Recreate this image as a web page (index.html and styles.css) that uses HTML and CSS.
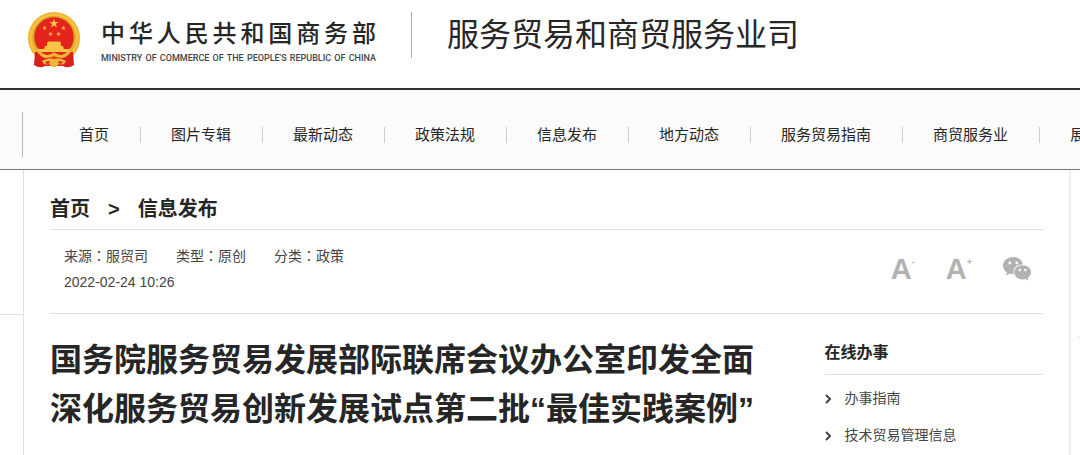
FILE: index.html
```html
<!DOCTYPE html>
<html lang="zh-CN">
<head>
  <meta charset="UTF-8" />
  <meta name="viewport" content="width=device-width, initial-scale=1" />
  <title>服务贸易和商贸服务业司</title>
  <link rel="stylesheet" href="styles.css">
</head>
<body>
  <header class="site-header">
    <a class="logo" href="#">
      <svg class="emblem" viewBox="0 0 52 56" aria-hidden="true">
        <defs>
          <polygon id="star" points="0,-10 2.3,-3.2 9.5,-3.1 3.8,1.2 5.9,8.1 0,4 -5.9,8.1 -3.8,1.2 -9.5,-3.1 -2.3,-3.2" />
        </defs>
        <circle cx="26" cy="26" r="26" fill="#eeb02f" />
        <circle cx="26" cy="26" r="23.500" fill="none" stroke="#f5c445" stroke-width="2" />
        <circle cx="26" cy="25" r="20" fill="#e4231c" stroke="#c98518" stroke-width="1" />
        <g fill="#f6c544">
          <use href="#star" transform="translate(26 11.5) scale(.48)" />
          <use href="#star" transform="translate(16.5 16) scale(.24)" />
          <use href="#star" transform="translate(35.500 16) scale(.24)" />
          <use href="#star" transform="translate(22.500 22) scale(.24)" />
          <use href="#star" transform="translate(30.500 22) scale(.24)" />
          <path d="M20 29.500h12l1 2h-14z M19 31h14v3H19z M17 34h18l1 3.500H16z M10 37h32l-2 3H12z" />
        </g>
        <path d="M7 40 Q12 38 16 43 Q26 48 36 43 Q40 38 45 40 L46 53 Q40 57 35 54 L17 54 Q12 57 6 53 Z" fill="#d9201c" />
        <path d="M9 37 Q16 49 26 42 Q36 49 43 37" fill="none" stroke="#f3b935" stroke-width="3" />
        <path d="M14 49 Q20 45 26 47 Q32 45 38 49 Q36 54 31 52 L28 55 H24 L21 52 Q16 54 14 49 Z" fill="#f0b43a" />
        <path d="M17 50l4-1 1 2-3 1z M35 50l-4-1-1 2 3 1z" fill="#d9201c" />
      </svg>
      <span class="logo-text">
        <span class="logo-cn">中华人民共和国商务部</span>
        <span class="logo-en">MINISTRY OF COMMERCE OF THE PEOPLE'S REPUBLIC OF CHINA</span>
      </span>
    </a>
    <h1 class="department">服务贸易和商贸服务业司</h1>
  </header>

  <nav class="main-nav">
    <ul>
      <li><a href="#">首页</a></li>
      <li><a href="#">图片专辑</a></li>
      <li><a href="#">最新动态</a></li>
      <li><a href="#">政策法规</a></li>
      <li><a href="#">信息发布</a></li>
      <li><a href="#">地方动态</a></li>
      <li><a href="#">服务贸易指南</a></li>
      <li><a href="#">商贸服务业</a></li>
      <li><a href="#">展</a></li>
    </ul>
  </nav>

  <div class="page">
    <div class="gutter gutter-left"></div>

    <main class="main">
      <div class="breadcrumb">
        <a href="#">首页</a>
        <span>&gt;</span>
        <a href="#">信息发布</a>
      </div>

      <div class="article-info">
        <div class="meta">
          <p class="meta-row">
            <span>来源<i class="colon" lang="zh-TW">：</i>服贸司</span>
            <span>类型<i class="colon" lang="zh-TW">：</i>原创</span>
            <span>分类<i class="colon" lang="zh-TW">：</i>政策</span>
          </p>
          <p class="meta-row">2022-02-24 10:26</p>
        </div>
        <div class="tools">
          <button type="button" class="tool" aria-label="缩小字号">A<sup>-</sup></button>
          <button type="button" class="tool" aria-label="放大字号">A<sup>+</sup></button>
          <button type="button" class="tool" aria-label="微信分享">
            <svg class="wechat" viewBox="0 0 28 24" aria-hidden="true">
              <path d="M10.200 0C4.500 0 0 3.800 0 8.600c0 2.800 1.500 5.200 3.900 6.800L3 18.500l3.700-1.900c1.200.3 2.300.5 3.500.5h.7c-.3-.8-.4-1.500-.4-2.300 0-4.400 4-7.300 8.800-7.300h.7C19.100 3 15 0 10.200 0z" fill="#b2b2b2" />
              <path d="M28 15.300c0-4-3.900-7.100-8.400-7.100-4.700 0-8.400 3.200-8.400 7.100 0 4 3.700 7.200 8.400 7.200 1 0 2-.2 2.900-.5l2.900 1.700-.8-2.700c2.100-1.400 3.400-3.500 3.400-5.700z" fill="#b2b2b2" />
              <g fill="#fff">
                <circle cx="6.800" cy="6" r="1.400" />
                <circle cx="13.800" cy="6" r="1.400" />
                <circle cx="16.800" cy="13" r="1.200" />
                <circle cx="22.300" cy="13" r="1.200" />
              </g>
            </svg>
          </button>
        </div>
      </div>

      <div class="content">
        <h2 class="article-title">国务院服务贸易发展部际联席会议办公室印发全面深化服务贸易创新发展试点第二批“最佳实践案例”</h2>

        <aside class="sidebar">
          <h3>在线办事</h3>
          <ul>
            <li><a href="#">
              <svg class="arrow" viewBox="0 0 6 10" aria-hidden="true"><path d="M1 1l4 4-4 4" /></svg>办事指南</a></li>
            <li><a href="#">
              <svg class="arrow" viewBox="0 0 6 10" aria-hidden="true"><path d="M1 1l4 4-4 4" /></svg>技术贸易管理信息</a></li>
          </ul>
        </aside>
      </div>
    </main>

    <div class="gutter gutter-right"></div>
  </div>
</body>
</html>
```
FILE: styles.css
```css
* {
  box-sizing: border-box;
  margin: 0;
  padding: 0;
}

:root {
  --text-color: #262626;
  --meta-color: #444;
  --line-color: #e0e0e0;
  --icon-color: #b2b2b2;
}

body {
  display: flex;
  flex-direction: column;
  min-height: 100vh;
  overflow-x: hidden;
  font-family: "Liberation Sans", "Noto Sans CJK SC", sans-serif;
  font-size: 14px;
  color: var(--text-color);
  background-color: #fff;
}

a {
  color: inherit;
  text-decoration: none;
}

ul {
  list-style: none;
}

/* header */
.site-header {
  display: flex;
  align-items: flex-start;
  padding: 12px 28px 20px;
  border-bottom: 2px solid #333;
}

.logo {
  display: flex;
  gap: 21px;
  padding-right: 35px;
}

.emblem {
  width: 52px;
  height: 56px;
}

.logo-text {
  display: flex;
  flex-direction: column;
  width: 275px;
  padding-top: 6px;
  text-align: justify;
  text-align-last: justify;
}

.logo-cn {
  font-size: 24px;
  font-weight: 500;
  line-height: 32px;
}

.logo-en {
  font-family: Roboto, "Liberation Sans", sans-serif;
  font-size: 9px;
  font-weight: 500;
  line-height: 16px;
  color: var(--meta-color);
}

.department {
  padding-left: 35px;
  border-left: 1px solid #aaa;
  font-size: 32px;
  font-weight: 400;
  line-height: 46px;
}

/* navigation */
.main-nav {
  padding: 22px 0 12px 22px;
  background-color: #fbfbfb;
  border-bottom: 1px solid #777;
  overflow: hidden;
}

.main-nav ul {
  display: flex;
  align-items: center;
  height: 45px;
  padding-left: 56px;
  border-left: 1px solid #bbb;
}

.main-nav li {
  flex: none;
  padding: 0 31px 0 30px;
  border-left: 1px solid #ccc;
  font-size: 15px;
  line-height: 16px;
  white-space: nowrap;
}

.main-nav li:first-child {
  padding-left: 0;
  border-left: none;
}

/* page body */
.page {
  display: flex;
  flex: 1;
}

.gutter::before {
  content: "";
  display: block;
  border-bottom: 1px solid var(--line-color);
}

.gutter-left {
  width: 24px;
  border-right: 1px solid var(--line-color);
}

.gutter-left::before {
  height: 144px;
}

.gutter-right {
  width: 11px;
  padding-left: 7px;
  border-left: 2px solid #eee;
}

.gutter-right::before {
  height: 167px;
}

.main {
  flex: 1;
  padding: 25px 26px 0;
}

.breadcrumb {
  display: flex;
  gap: 18px;
  padding-bottom: 6px;
  border-bottom: 1px solid var(--line-color);
  font-size: 20px;
  font-weight: bold;
  line-height: 28px;
}

.article-info {
  display: flex;
  justify-content: space-between;
  padding: 12px 12px 18px 14px;
  border-bottom: 1px solid var(--line-color);
}

.meta-row {
  display: flex;
  gap: 28px;
  line-height: 26px;
  color: var(--meta-color);
}

.colon {
  font-family: "Noto Sans CJK TC", sans-serif;
  font-style: normal;
}

.tools {
  display: flex;
  align-items: center;
  gap: 31px;
}

.tool {
  display: flex;
  border: none;
  background: none;
  color: var(--icon-color);
  font-family: "Liberation Sans", sans-serif;
  font-size: 29px;
  font-weight: bold;
  line-height: 28px;
  cursor: pointer;
}

.tool sup {
  font-size: 9px;
  line-height: 14px;
}

.wechat {
  width: 28px;
  height: 24px;
}

/* article and sidebar */
.content {
  display: flex;
  justify-content: space-between;
  gap: 56px;
}

.article-title {
  flex: 1;
  padding-top: 22px;
  font-size: 32px;
  line-height: 49px;
}

.sidebar {
  width: 22%;
  padding-top: 27px;
}

.sidebar h3 {
  padding-bottom: 9px;
  border-bottom: 1px solid var(--line-color);
  font-size: 16px;
  line-height: 24px;
}

.sidebar ul {
  padding-top: 5px;
}

.sidebar a {
  display: flex;
  align-items: center;
  gap: 14px;
  line-height: 37px;
  color: var(--meta-color);
}

.arrow {
  width: 6px;
  height: 10px;
  fill: none;
  stroke: #444;
  stroke-width: 2;
}
```
